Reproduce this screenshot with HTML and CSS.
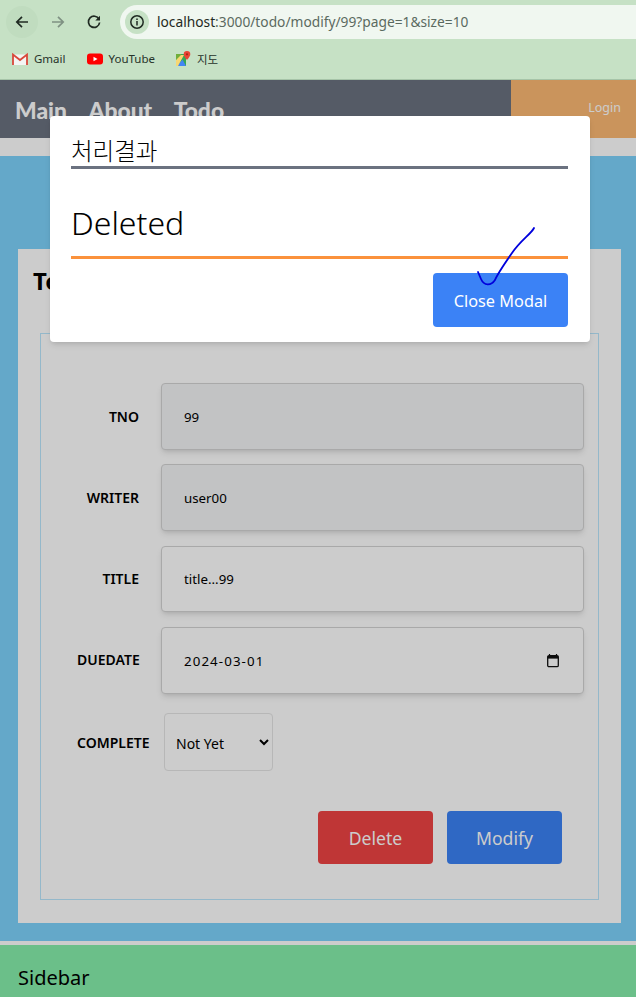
FILE: index.html
```html
<!DOCTYPE html>
<html lang="ko">
<head>
<meta charset="utf-8">
<title>Todo Modify</title>
<link rel="stylesheet" href="styles.css">
</head>
<body>
<div class="chrome">
  <div class="toolbar">
    <span class="nav-btn nav-btn-active">
      <svg class="nav-icon" viewBox="0 0 16 16"><path d="M14 8H3M8 2.8 2.8 8 8 13.2" fill="none" stroke="#1f2a22" stroke-width="1.7"/></svg>
    </span>
    <span class="nav-btn">
      <svg class="nav-icon" viewBox="0 0 16 16"><path d="M2 8h11M8 2.8 13.2 8 8 13.2" fill="none" stroke="#7f9183" stroke-width="1.7"/></svg>
    </span>
    <span class="nav-btn">
      <svg class="nav-icon" viewBox="0 0 16 16"><path d="M13 5.2A5.6 5.6 0 1 0 13.6 8.5" fill="none" stroke="#1f2a22" stroke-width="1.7"/><path d="M14 1.8v4.7H9.3z" fill="#1f2a22"/></svg>
    </span>
    <div class="url-pill">
      <span class="info-badge">
        <svg class="info-icon" viewBox="0 0 16 16"><circle cx="8" cy="8" r="6.2" fill="none" stroke="#1f2a22" stroke-width="1.5"/><path d="M8 7v4.4M8 4.4v1.5" stroke="#1f2a22" stroke-width="1.5"/></svg>
      </span>
      <span class="url-text"><span class="url-host">localhost</span>:3000/todo/modify/99?page=1&amp;size=10</span>
    </div>
  </div>
  <div class="bookmarks">
    <span class="bookmark bookmark-gmail">
      <svg class="bm-icon" viewBox="0 0 16 16"><path d="M1 3.5h14V14H1z" fill="#f4f4f4"/><path d="M1 14V3.5L8 9l7-5.500V14" fill="none" stroke="#d9483b" stroke-width="1.800"/></svg>
      Gmail
    </span>
    <span class="bookmark bookmark-yt">
      <svg class="bm-icon" viewBox="0 0 16 16"><rect y="2.500" width="16" height="11" rx="3" fill="#f00"/><path d="M6.500 5.700v4.600L10.500 8z" fill="#fff"/></svg>
      YouTube
    </span>
    <span class="bookmark">
      <svg class="bm-icon" viewBox="0 0 16 16"><path d="M1 3h10v12H1z" fill="#34a853"/><path d="M1 3h5v5H1z" fill="#fbbc04" opacity=".3"/><path d="M2 15 7.500 8.500 11 15z" fill="#4285f4"/><path d="M1 15V9l5-5h3L3 15z" fill="#f7d774"/><path d="M12 0a3.300 3.300 0 0 0-3.300 3.300C8.700 5.500 12 9 12 9s3.300-3.500 3.300-5.700A3.300 3.300 0 0 0 12 0z" fill="#ea4335"/><circle cx="12" cy="3.300" r="1.100" fill="#a52714"/></svg>
      지도
    </span>
  </div>
</div>

<div class="page">
  <header class="site-nav">
    <div class="site-links">
      <a class="site-link">Main</a>
      <a class="site-link">About</a>
      <a class="site-link">Todo</a>
    </div>
    <div class="site-login"><a class="login-link">Login</a></div>
  </header>

  <main class="content">
    <section class="card">
      <h1 class="card-title">Todo Modify Page</h1>
      <div class="form-box">
        <div class="row row-tno">
          <label class="label">TNO</label>
          <input class="field field-readonly" value="99" readonly>
        </div>
        <div class="row row-writer">
          <label class="label">WRITER</label>
          <input class="field field-readonly" value="user00" readonly>
        </div>
        <div class="row row-title">
          <label class="label">TITLE</label>
          <input class="field field-short" value="title...99">
        </div>
        <div class="row row-due">
          <label class="label label-due">DUEDATE</label>
          <div class="field field-date">
            <span>2024-03-01</span>
            <svg class="cal-icon" viewBox="0 0 12 14"><path d="M2.500 0v2M9.500 0v2" stroke="#111" stroke-width="1.200"/><rect x=".7" y="1.700" width="10.600" height="11" rx="1.300" fill="none" stroke="#111" stroke-width="1.300"/><path d="M.7 2h10.600v2.600H.7z" fill="#111"/></svg>
          </div>
        </div>
        <div class="row row-complete">
          <label class="label label-complete">COMPLETE</label>
          <select class="select">
            <option>Not Yet</option>
            <option>Completed</option>
          </select>
        </div>
        <div class="actions">
          <button class="btn btn-delete">Delete</button>
          <button class="btn btn-modify">Modify</button>
        </div>
      </div>
    </section>
  </main>

  <aside class="sidebar">Sidebar</aside>

  <div class="overlay">
    <div class="modal">
      <div class="modal-title">처리결과</div>
      <div class="modal-body">Deleted</div>
      <div class="modal-footer">
        <button class="btn-close">Close Modal</button>
      </div>
    </div>
  </div>

  <svg class="scribble" viewBox="0 0 636 997"><path d="M534 228C531 234 521 240 512 253C505 263 498 273 495 280C491 286 484 286 481 279L478 272" fill="none" stroke="#0000dc" stroke-width="1.800" stroke-linecap="round"/></svg>
</div>
</body>
</html>
```

FILE: styles.css
```css
* {
  box-sizing: border-box;
}

html,
body {
  margin: 0;
  padding: 0;
}

body {
  width: 636px;
  height: 997px;
  overflow: hidden;
  background: #fff;
  font-family: "Noto Sans", "Noto Sans CJK KR", sans-serif;
  color: #000;
}

/* browser chrome */
.chrome {
  height: 80px;
  background: #c6e1c5;
  border-bottom: 1px solid #a6c4a8;
}

.toolbar {
  height: 44px;
  padding: 5px 0 5px 6px;
  display: flex;
  align-items: center;
}

.nav-btn {
  width: 32px;
  height: 32px;
  margin-right: 4px;
  border-radius: 50%;
  display: flex;
  align-items: center;
  justify-content: center;
  flex: none;
}

.nav-btn-active {
  background: #c0dcbf;
}

.nav-icon {
  width: 16px;
  height: 16px;
}

.url-pill {
  flex: 1;
  height: 34px;
  margin-left: 6px;
  border-radius: 17px 0 0 17px;
  background: #f0f7f0;
  display: flex;
  align-items: center;
  padding-left: 5px;
}

.info-badge {
  width: 24px;
  height: 24px;
  border-radius: 50%;
  background: #c6e1c5;
  display: flex;
  align-items: center;
  justify-content: center;
}

.info-icon {
  width: 16px;
  height: 16px;
}

.url-text {
  margin-left: 8px;
  margin-top: -1px;
  font-size: 13.750px;
  color: #5b6a60;
  white-space: nowrap;
}

.url-host {
  color: #1f2a22;
}

.bookmarks {
  height: 35px;
  padding: 0 0 6px 12px;
  display: flex;
  align-items: center;
  font-size: 11.500px;
  color: #26332a;
}

.bookmark {
  display: flex;
  align-items: center;
  gap: 6px;
}

.bookmark-gmail {
  margin-right: 21px;
}

.bookmark-yt {
  margin-right: 20px;
}

.bm-icon {
  width: 16px;
  height: 16px;
  flex: none;
}

/* page */
.page {
  position: relative;
  height: 917px;
}

.site-nav {
  height: 58px;
  display: flex;
  background: #6b7280;
}

.site-links {
  flex: 1;
  display: flex;
  gap: 21.500px;
  padding: 14px 0 0 15px;
}

.site-link {
  font-family: Lato, sans-serif;
  font-size: 22.800px;
  font-weight: 900;
  line-height: 32px;
  color: #fff;
}

.site-login {
  width: 125px;
  background: #fdba74;
  padding: 15px 15px 0 0;
  text-align: right;
}

.login-link {
  font-size: 12.500px;
  line-height: 18px;
  color: #fff;
}

.content {
  margin-top: 18px;
  height: 785px;
  padding: 93px 15px 0 18px;
  background: #7dd3fc;
}

.card {
  height: 674px;
  background: #fff;
  padding: 16px 22px 0;
}

.card-title {
  margin: 0 0 0 -7px;
  height: 68px;
  font-size: 24px;
  line-height: 32px;
  font-weight: 700;
}

.form-box {
  height: 567px;
  border: 1px solid #bae6fd;
  padding-top: 49px;
}

.row {
  display: flex;
  align-items: center;
  padding-left: 36px;
}

.row-writer {
  margin-top: 14px;
}

.row-title {
  margin-top: 15px;
}

.row-due {
  margin-top: 15px;
}

.row-complete {
  margin-top: 19px;
}

.label {
  width: 62px;
  margin-right: 22px;
  flex: none;
  font-size: 14px;
  font-weight: 600;
  line-height: 18px;
  text-align: right;
  white-space: nowrap;
}

.label-due {
  width: 65px;
  margin-right: 19px;
  margin-top: -2px;
  text-align: left;
}

.label-complete {
  width: 75px;
  margin-right: 12px;
  margin-top: 2px;
  text-align: left;
}

.field {
  width: 423px;
  height: 67px;
  border: 1px solid #d4d4d4;
  border-radius: 4px;
  padding: 0 22px;
  background: #fff;
  box-shadow: 0 4px 6px -1px rgba(0, 0, 0, .1), 0 2px 4px -2px rgba(0, 0, 0, .1);
  font-family: inherit;
  font-size: 13.300px;
  color: #000;
  outline: none;
}

.field-readonly {
  background: #f3f4f6;
}

.field-short {
  height: 66px;
}

.field-date {
  display: flex;
  align-items: center;
  justify-content: space-between;
  padding-right: 24px;
  letter-spacing: 1.100px;
}

.cal-icon {
  width: 12px;
  height: 14px;
}

.select {
  width: 109px;
  height: 58px;
  border: 1px solid #e5e5e5;
  border-radius: 4px;
  padding: 2px 7px 0;
  background: #fff;
  font-family: inherit;
  font-size: 14px;
  color: #000;
}

.actions {
  margin-top: 40px;
  display: flex;
  justify-content: flex-end;
  gap: 14px;
  padding-right: 36px;
}

.btn {
  width: 115px;
  height: 53px;
  border: 0;
  border-radius: 4px;
  font-family: inherit;
  font-size: 17.600px;
  color: #fff;
}

.btn-delete {
  background: #ef4444;
}

.btn-modify {
  background: #3b82f6;
}

.sidebar {
  margin-top: 4px;
  height: 52px;
  background: #86efac;
  padding: 19px 0 0 18px;
  font-size: 20px;
  line-height: 28px;
}

/* modal */
.overlay {
  position: absolute;
  inset: 0;
  padding: 36px 0 0 50px;
  background: rgba(0, 0, 0, .2);
}

.modal {
  width: 540px;
  height: 226px;
  padding: 0 22px 0 21px;
  background: #fff;
  border-radius: 4px;
  box-shadow: 0 4px 6px -1px rgba(0, 0, 0, .1), 0 2px 4px -2px rgba(0, 0, 0, .1);
}

.modal-title {
  height: 53px;
  padding-top: 21px;
  border-bottom: 3px solid #6b7280;
  font-size: 23.500px;
  font-weight: 300;
  line-height: 29px;
}

.modal-body {
  height: 90px;
  padding-top: 32px;
  border-bottom: 3px solid #fb923c;
  font-size: 32px;
  font-weight: 300;
  line-height: 44px;
}

.modal-footer {
  margin-top: 14px;
  display: flex;
  justify-content: flex-end;
}

.btn-close {
  width: 135px;
  height: 54px;
  border: 0;
  border-radius: 4px;
  padding: 1px 0 0;
  background: #3b82f6;
  font-family: inherit;
  font-size: 16.300px;
  color: #fff;
}

.scribble {
  position: absolute;
  left: 0;
  top: -80px;
  width: 636px;
  height: 997px;
  pointer-events: none;
}
```
